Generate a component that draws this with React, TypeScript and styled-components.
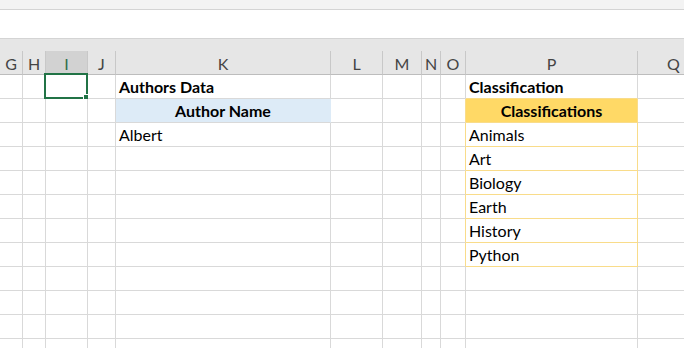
import React from 'react';
import styled, { createGlobalStyle } from 'styled-components';

const GlobalStyle = createGlobalStyle`
	html, body {
		margin: 0;
		padding: 0;
		background: #ffffff;
		overflow: hidden;
	}
	body {
		font-family: Lato, 'Open Sans', sans-serif;
	}
`;

const COLS = [
	{ name: 'G', width: 23 },
	{ name: 'H', width: 23 },
	{ name: 'I', width: 42 },
	{ name: 'J', width: 28 },
	{ name: 'K', width: 215 },
	{ name: 'L', width: 52 },
	{ name: 'M', width: 39 },
	{ name: 'N', width: 19 },
	{ name: 'O', width: 25 },
	{ name: 'P', width: 172 },
	{ name: 'Q', width: 72 },
];

const template = COLS.map((c) => `${c.width}px`).join(' ');

const GRID = '#d9d9d9';
const TABLE_LINE = '#f9dc8a';
const BLUE = '#ddebf7';
const GOLD = '#ffd966';

type CellData = { text: string; bold?: boolean; center?: boolean; fill?: string };

const classes = ['Animals', 'Art', 'Biology', 'Earth', 'History', 'Python'];

const rows: Record<string, CellData>[] = [
	{ K: { text: 'Authors Data', bold: true }, P: { text: 'Classification', bold: true } },
	{
		K: { text: 'Author Name', bold: true, center: true, fill: BLUE },
		P: { text: 'Classifications', bold: true, center: true, fill: GOLD },
	},
	{ K: { text: 'Albert' }, P: { text: classes[0] } },
	...classes.slice(1).map((c) => ({ P: { text: c } })),
	{},
	{},
	{},
	{},
	{},
];

const Page = styled.div`
	width: 684px;
	height: 348px;
	overflow: hidden;
	display: flex;
	flex-direction: column;
`;

const TopStrip = styled.div`
	height: 9px;
	flex-shrink: 0;
	background: #f3f3f3;
	border-bottom: 1px solid #d4d4d4;
`;

const FormulaBar = styled.div`
	height: 28px;
	flex-shrink: 0;
	background: #ffffff;
	border-bottom: 1px solid #d4d4d4;
`;

const HeaderArea = styled.div`
	flex-shrink: 0;
	background: #e6e6e6;
	padding-top: 12px;
`;

const Grid = styled.div`
	display: grid;
	grid-template-columns: ${template};
	grid-auto-rows: 24px;
	width: max-content;
`;

const ColHeader = styled.div<{ $active?: boolean }>`
	box-sizing: border-box;
	height: 24px;
	border-right: 1px solid #c8c8c8;
	border-bottom: 1px solid #bdbdbd;
	background: ${(p) => (p.$active ? '#d2d2d2' : '#e6e6e6')};
	color: ${(p) => (p.$active ? '#2f6e49' : '#444444')};
	font-size: 16px;
	display: flex;
	align-items: center;
	justify-content: center;
	padding-top: 1px;
`;

const Cell = styled.div<{
	$bold?: boolean;
	$center?: boolean;
	$fill?: string;
	$right?: string;
	$bottom?: string;
}>`
	position: relative;
	box-sizing: border-box;
	border-right: 1px solid ${(p) => p.$right || GRID};
	border-bottom: 1px solid ${(p) => p.$bottom || GRID};
	background: ${(p) => p.$fill || '#ffffff'};
	font-size: 16px;
	font-weight: ${(p) => (p.$bold ? 700 : 400)};
	color: #000000;
	display: flex;
	align-items: flex-end;
	justify-content: ${(p) => (p.$center ? 'center' : 'flex-start')};
	padding: 0 3px 2px 3px;
	white-space: nowrap;
	overflow: visible;
`;

const Selection = styled.div`
	position: absolute;
	top: -2px;
	left: -2px;
	right: -1px;
	bottom: -1px;
	border: 2px solid #217346;
	pointer-events: none;
`;

const Handle = styled.div`
	position: absolute;
	right: -4px;
	bottom: -4px;
	width: 5px;
	height: 5px;
	background: #217346;
	border: 1px solid #ffffff;
`;

const inTable = (r: number) => r >= 1 && r <= 7;

const App = () => {
	return (
		<Page>
			<GlobalStyle />
			<TopStrip />
			<FormulaBar />
			<HeaderArea>
				<Grid>
					{COLS.map((c) => (
						<ColHeader key={c.name} $active={c.name === 'I'}>
							{c.name}
						</ColHeader>
					))}
				</Grid>
			</HeaderArea>
			<Grid>
				{rows.map((row, r) =>
					COLS.map((c) => {
						const d = row[c.name];
						let right: string | undefined;
						let bottom: string | undefined;
						if (d?.fill) right = d.fill;
						if (inTable(r) && (c.name === 'O' || c.name === 'P')) right = TABLE_LINE;
						if (c.name === 'P' && r <= 7) bottom = TABLE_LINE;
						return (
							<Cell
								key={`${c.name}${r}`}
								$bold={d?.bold}
								$center={d?.center}
								$fill={d?.fill}
								$right={right}
								$bottom={bottom}
							>
								{d?.text}
								{r === 0 && c.name === 'I' && (
									<Selection>
										<Handle />
									</Selection>
								)}
							</Cell>
						);
					})
				)}
			</Grid>
		</Page>
	);
};

export default App;
